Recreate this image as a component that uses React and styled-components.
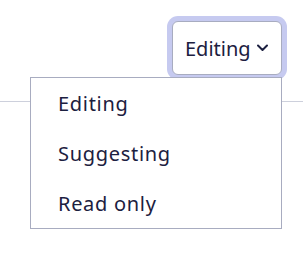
import React, { useState } from "react";
import styled, { createGlobalStyle } from "styled-components";

const GlobalStyle = createGlobalStyle`
  html, body, #root {
    height: 100%;
  }
  body {
    margin: 0;
    background: #ffffff;
    font-family: "Noto Sans", "Open Sans", sans-serif;
  }
`;

const Page = styled.div`
  min-height: 263px;
  height: 100%;
`;

const Header = styled.div`
  box-sizing: border-box;
  display: flex;
  justify-content: flex-end;
  align-items: flex-start;
  height: 102px;
  padding: 21px 21px 0 0;
  border-bottom: 1px solid #cdd0dc;
`;

const Picker = styled.div`
  position: relative;
`;

const Toggle = styled.button`
  box-sizing: border-box;
  display: flex;
  align-items: center;
  gap: 6px;
  width: 110px;
  height: 54px;
  padding: 0 0 0 12px;
  background: #ffffff;
  border: 1px solid #a8acc0;
  border-radius: 6px;
  box-shadow: 0 0 0 5px #c6caf0;
  font-family: inherit;
  font-size: 20px;
  letter-spacing: 0;
  color: #1c2040;
  cursor: pointer;
`;

const Chevron = () => (
  <svg width="11" height="8" viewBox="0 0 11 8" fill="none">
    <path d="M1 1.5l4.5 4.5 4.5-4.5" stroke="#1c2040" strokeWidth="2" strokeLinecap="round" strokeLinejoin="round" />
  </svg>
);

const Menu = styled.ul`
  position: absolute;
  top: 56px;
  right: 0;
  z-index: 2;
  box-sizing: border-box;
  width: 252px;
  margin: 0;
  padding: 0;
  list-style: none;
  background: #ffffff;
  border: 1px solid #a8acc0;
`;

const Item = styled.li`
  display: flex;
  align-items: center;
  height: 50px;
  padding-left: 27px;
  font-size: 20px;
  letter-spacing: 0.7px;
  color: #1c2040;
  cursor: pointer;
`;

const options = ["Editing", "Suggesting", "Read only"];

export default function App() {
  const [mode, setMode] = useState("Editing");
  return (
    <Page>
      <GlobalStyle />
      <Header>
        <Picker>
          <Toggle>
            {mode}
            <Chevron />
          </Toggle>
          <Menu>
            {options.map((o) => (
              <Item key={o} onClick={() => setMode(o)}>{o}</Item>
            ))}
          </Menu>
        </Picker>
      </Header>
    </Page>
  );
}
